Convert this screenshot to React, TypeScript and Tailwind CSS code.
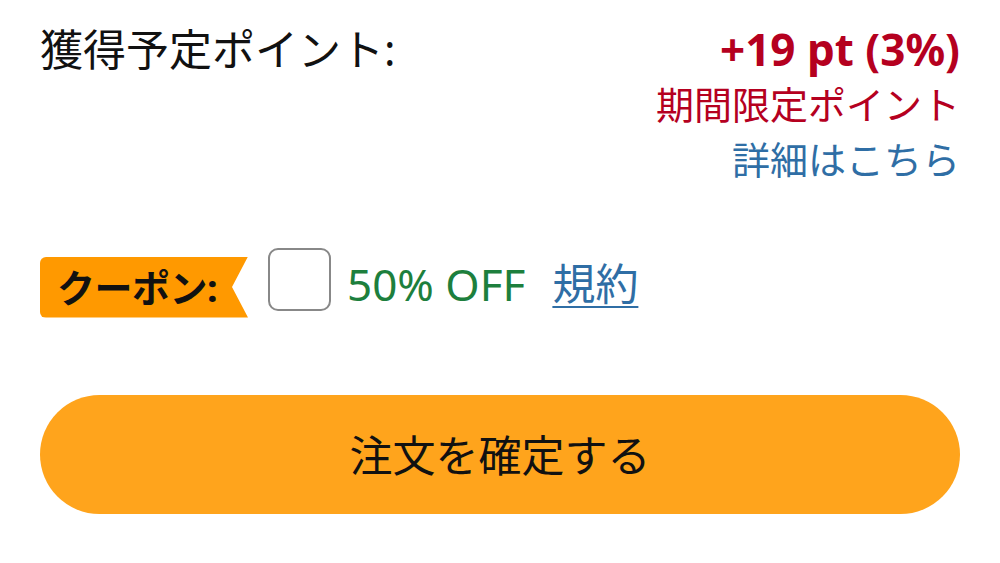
import React, { useState } from 'react';

const JP = "font-['Noto_Sans','Noto_Sans_CJK_JP',sans-serif]";

const App: React.FC = () => {
  const [useCoupon, setUseCoupon] = useState(false);

  return (
    <div className={`w-[1000px] h-[563px] overflow-hidden bg-white px-[40px] pt-[22px] ${JP}`}>
      {/* points */}
      <div className="flex justify-between items-start">
        <div className="text-[43px] leading-[55px] text-[#111]">獲得予定ポイント:</div>
        <div className="flex flex-col items-end">
          <div className="text-[44px] leading-[55px] font-bold text-[#b5001f]">+19 pt (3%)</div>
          <div className="text-[38px] leading-[55px] text-[#b5001f]">期間限定ポイント</div>
          <a href="#" className="text-[38px] leading-[55px] text-[#2f6ea5]">詳細はこちら</a>
        </div>
      </div>

      {/* coupon */}
      <div className="mt-[69px] flex items-center h-[62px]">
        <div className="h-[61px] w-[208px] pl-[17px] flex items-center bg-[#ff9900] rounded-l-[6px] [clip-path:polygon(0_0,100%_0,calc(100%_-_16px)_50%,100%_100%,0_100%)]">
          <span className="text-[38px] font-bold text-[#111] tracking-[-0.5px]">クーポン:</span>
        </div>
        <button
          onClick={() => setUseCoupon(!useCoupon)}
          className="ml-[20px] mb-[16px] w-[63px] h-[63px] rounded-[10px] border-[2.5px] border-[#888] bg-white flex items-center justify-center"
        >
          {useCoupon && <span className="text-[40px] text-[#111]">✓</span>}
        </button>
        <span className="ml-[16px] mb-[6px] text-[44px] text-[#1d7f3d]">50% OFF</span>
        <a href="#" className="ml-[27px] mb-[6px] text-[43px] text-[#2f6ea5] underline underline-offset-[6px] decoration-2">規約</a>
      </div>

      {/* confirm */}
      <button className="mt-[77px] w-full h-[119px] rounded-full bg-[#ffa41c] flex items-center justify-center pt-[4px] text-[43px] text-[#111]">
        注文を確定する
      </button>
    </div>
  );
};

export default App;
